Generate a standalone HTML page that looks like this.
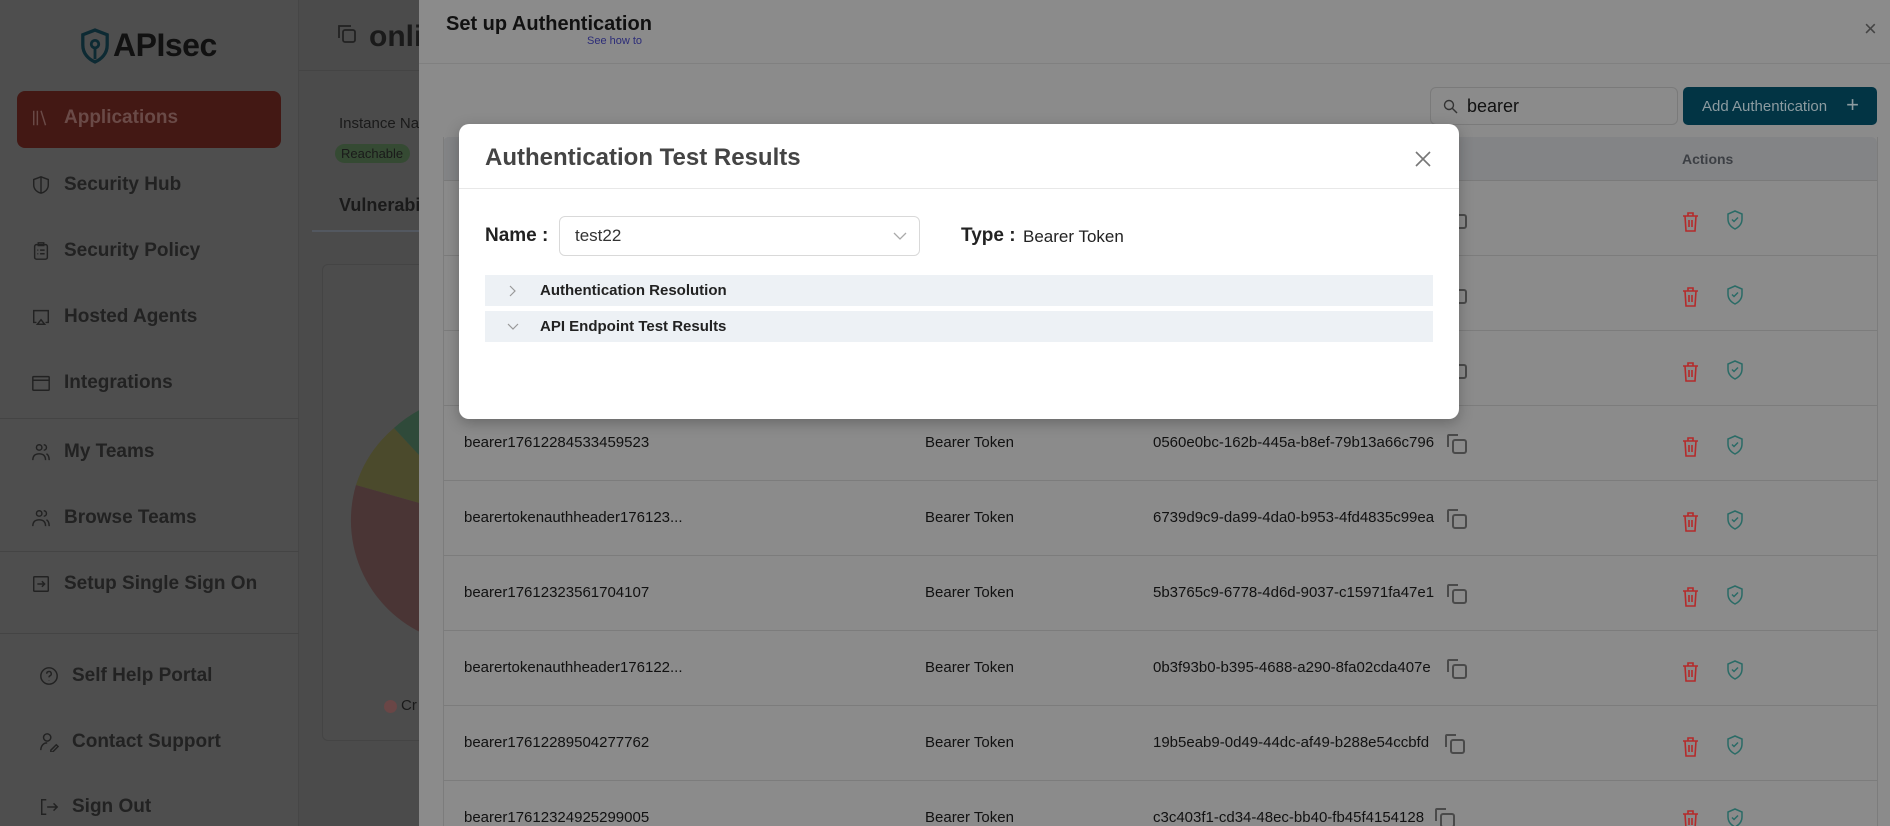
<!DOCTYPE html>
<html><head><meta charset="utf-8"><style>
*{box-sizing:border-box;margin:0;padding:0}
html,body{width:1890px;height:826px;overflow:hidden}
body{background:#4b4b4b;font-family:"Liberation Sans",Arial,sans-serif}
#wrap{position:relative;width:1890px;height:826px;overflow:hidden;background:#4b4b4b}
.abs{position:absolute}
#side{left:0;top:0;width:299px;height:826px;background:#4e4e4e;border-right:1px solid #464646}
.mi{position:absolute;left:31px;font-size:19px;font-weight:bold;color:#222;display:flex;align-items:center;gap:13px}
.mi svg{width:20px;height:20px;stroke:#222;fill:none;stroke-width:1.6}
.hr{position:absolute;left:0;width:299px;height:1px;background:#444}
#drawer{left:419px;top:0;width:1471px;height:826px;background:#8b8b8b}
.row{position:absolute;left:443px;width:1434px;height:75px;border-bottom:1px solid #7c7c7c;font-size:15px;color:#111}
.row span{position:absolute;top:28px}
#modal{left:459px;top:124px;width:1000px;height:295px;background:#fff;border-radius:10px;box-shadow:0 4px 14px rgba(0,0,0,.25)}
.acc{position:absolute;left:26px;width:948px;height:31px;background:#edf1f5;font-size:15px;font-weight:bold;color:#222}
.acc b{position:absolute;left:55px;top:7px}
</style></head><body><div id="wrap">
<div id="side" class="abs">
 <div class="abs" style="left:80px;top:27px;display:flex;align-items:center;gap:3px">
  <svg width="30" height="36" viewBox="0 0 32 38"><path d="M16 2 L29 7 V18 C29 27 23 33 16 36 C9 33 3 27 3 18 V7 Z" fill="none" stroke="#0d2a33" stroke-width="3.5"/><circle cx="16" cy="17" r="4" fill="none" stroke="#0d2a33" stroke-width="3"/><path d="M16 21 V33" stroke="#0d2a33" stroke-width="3"/></svg>
  <span style="font-size:32px;font-weight:bold;color:#111;letter-spacing:-.5px">APIsec</span>
 </div>
 <div class="abs" style="left:17px;top:91px;width:264px;height:57px;background:#431814;border-radius:8px"></div>
 <div class="mi" style="top:107px;color:#6a4a47"><svg viewBox="0 0 22 22" style="stroke:#6a4a47"><path d="M3 3v16M7 3v16M11 3l5 16"/></svg>Applications</div>
 <div class="mi" style="top:174px"><svg viewBox="0 0 22 22"><path d="M11 2 L19 5 V11 C19 16 15 19 11 20 C7 19 3 16 3 11 V5 Z M11 2 V20"/></svg>Security Hub</div>
 <div class="mi" style="top:240px"><svg viewBox="0 0 22 22"><rect x="4" y="4" width="14" height="16" rx="2"/><path d="M8 2h6v3H8zM7 10h1M10 10h5M7 14h1M10 14h5"/></svg>Security Policy</div>
 <div class="mi" style="top:306px"><svg viewBox="0 0 22 22"><path d="M6 17H3V4h16v13h-3M11 14l4 5H7z"/></svg>Hosted Agents</div>
 <div class="mi" style="top:372px"><svg viewBox="0 0 22 22"><rect x="2" y="4" width="18" height="15" rx="1"/><path d="M2 8h18"/></svg>Integrations</div>
 <div class="hr" style="top:418px"></div>
 <div class="mi" style="top:441px"><svg viewBox="0 0 22 22"><circle cx="9" cy="6" r="3"/><path d="M2 20c0-5 3-7 7-7s7 2 7 7M14 3a3 3 0 0 1 0 6M17 13c2 1 3 3 3 7"/></svg>My Teams</div>
 <div class="mi" style="top:507px"><svg viewBox="0 0 22 22"><circle cx="9" cy="6" r="3"/><path d="M2 20c0-5 3-7 7-7s7 2 7 7M14 3a3 3 0 0 1 0 6M17 13c2 1 3 3 3 7"/></svg>Browse Teams</div>
 <div class="hr" style="top:551px"></div>
 <div class="mi" style="top:573px"><svg viewBox="0 0 22 22"><rect x="3" y="3" width="16" height="16" rx="1"/><path d="M7 11h8M12 8l3 3-3 3"/></svg>Setup Single Sign On</div>
 <div class="hr" style="top:633px"></div>
 <div class="mi" style="top:665px;left:39px"><svg viewBox="0 0 22 22"><circle cx="11" cy="11" r="9"/><path d="M8.5 8.5a2.5 2.5 0 1 1 3.5 2.3c-.7.4-1 1-1 1.7M11 15.5v.5"/></svg>Self Help Portal</div>
 <div class="mi" style="top:731px;left:39px"><svg viewBox="0 0 22 22"><circle cx="9" cy="6" r="4"/><path d="M2 20c0-5 3-8 7-8M13 20l6-6 2 2-6 6h-2z"/></svg>Contact Support</div>
 <div class="mi" style="top:796px;left:39px"><svg viewBox="0 0 22 22"><path d="M8 3H3v16h5M9 11h11M16 7l4 4-4 4"/></svg>Sign Out</div>
</div>
<svg class="abs" style="left:335px;top:22px" width="24" height="24" viewBox="0 0 24 24" fill="none" stroke="#222" stroke-width="1.8"><path d="M4 16V4h12"/><rect x="8" y="8" width="12" height="12" rx="2"/></svg>
<div class="abs" style="left:369px;top:20px;font-size:30px;font-weight:bold;color:#1a1a1a">onli</div>
<div class="abs" style="left:299px;top:70px;width:120px;height:1px;background:#444"></div>
<div class="abs" style="left:339px;top:115px;font-size:15px;color:#1a1a1a">Instance Na</div>
<div class="abs" style="left:335px;top:144px;width:75px;height:19px;border-radius:10px;background:#354a33;font-size:13px;color:#1a1a1a;padding:2px 6px">Reachable</div>
<div class="abs" style="left:339px;top:195px;font-size:18px;font-weight:bold;color:#1a1a1a">Vulnerabi</div>
<div class="abs" style="left:312px;top:230px;width:107px;height:2px;background:#535860"></div>
<div class="abs" style="left:322px;top:264px;width:120px;height:477px;border:1px solid #444;border-radius:6px;background:#4c4c4c"></div>
<svg class="abs" style="left:340px;top:380px" width="79" height="280" viewBox="340 380 79 280">
 <path d="M479 520 L356 485 A125 125 0 0 0 440 640 Z" fill="#4a3535"/>
 <path d="M479 520 L394 428 A125 125 0 0 0 356 485 Z" fill="#4b4a2c"/>
 <path d="M479 520 L430 405 A125 125 0 0 0 394 428 Z" fill="#2f4a3a"/>
</svg>
<div class="abs" style="left:384px;top:700px;width:13px;height:13px;border-radius:50%;background:#6a4646"></div>
<div class="abs" style="left:401px;top:697px;font-size:15px;color:#1a1a1a">Cr</div>
<div id="drawer" class="abs">
 <div class="abs" style="left:27px;top:13px;font-size:20px;font-weight:bold;color:#111">Set up Authentication</div>
 <div class="abs" style="left:168px;top:35px;font-size:11px;color:#2c2c78">See how to</div>
 <div class="abs" style="left:1445px;top:16px;font-size:22px;color:#444">×</div>
 <div class="abs" style="left:0;top:63px;width:1471px;height:1px;background:#808080"></div>
 <div class="abs" style="left:1011px;top:87px;width:248px;height:38px;border:1px solid #7a7a7a;border-radius:6px;font-size:18px;color:#111;padding:8px 0 0 36px">bearer
  <svg class="abs" style="left:12px;top:11px" width="15" height="15" viewBox="0 0 15 15" fill="none" stroke="#333" stroke-width="1.4"><circle cx="6" cy="6" r="4.5"/><path d="M9.5 9.5L14 14"/></svg></div>
 <div class="abs" style="left:1264px;top:87px;width:194px;height:38px;background:#023444;border-radius:5px;color:#8c9ba0;font-size:15px;padding:11px 0 0 19px">Add Authentication <span style="font-size:22px;position:absolute;right:18px;top:5px">+</span></div>
 <div class="abs" style="left:24px;top:137px;width:1434px;height:44px;background:#838486;border-radius:6px 6px 0 0;border-bottom:1px solid #7a7a7a"></div>
 <div class="abs" style="left:1263px;top:151px;font-size:14px;font-weight:bold;color:#3c3f44">Actions</div>
 <div class="abs" style="left:24px;top:137px;width:1px;height:689px;background:#7c7c7c"></div>
 <div class="abs" style="left:1458px;top:137px;width:1px;height:689px;background:#7c7c7c"></div>
</div>
<div class="row" style="top:181px"></div>
<div class="row" style="top:256px"></div>
<div class="row" style="top:331px"></div>
<div class="row" style="top:406px"><span style="left:21px">bearer17612284533459523</span><span style="left:482px">Bearer Token</span><span style="left:710px">0560e0bc-162b-445a-b8ef-79b13a66c796</span></div>
<div class="row" style="top:481px"><span style="left:21px">bearertokenauthheader176123...</span><span style="left:482px">Bearer Token</span><span style="left:710px">6739d9c9-da99-4da0-b953-4fd4835c99ea</span></div>
<div class="row" style="top:556px"><span style="left:21px">bearer17612323561704107</span><span style="left:482px">Bearer Token</span><span style="left:710px">5b3765c9-6778-4d6d-9037-c15971fa47e1</span></div>
<div class="row" style="top:631px"><span style="left:21px">bearertokenauthheader176122...</span><span style="left:482px">Bearer Token</span><span style="left:710px">0b3f93b0-b395-4688-a290-8fa02cda407e</span></div>
<div class="row" style="top:706px"><span style="left:21px">bearer17612289504277762</span><span style="left:482px">Bearer Token</span><span style="left:710px">19b5eab9-0d49-44dc-af49-b288e54ccbfd</span></div>
<div class="row" style="top:781px;height:45px;border-bottom:none"><span style="left:21px">bearer17612324925299005</span><span style="left:482px">Bearer Token</span><span style="left:710px">c3c403f1-cd34-48ec-bb40-fb45f4154128</span></div>
<svg class="abs" style="left:0;top:0" width="1890" height="826" fill="none">
 <defs>
  <g id="cp" stroke="#4a4a4a" stroke-width="2"><path d="M2 14V3a1 1 0 0 1 1-1h9"/><rect x="7" y="7" width="13" height="13" rx="2"/></g>
  <g id="tr" stroke="#b52a2a" stroke-width="1.6"><path d="M1 4h15M6 4V1h5v3M3 4l1 15h9l1-15M7 8v7M10 8v7"/></g>
  <g id="sh" stroke="#2a6b66" stroke-width="1.5"><path d="M8 1l7 3v5c0 5-3 8-7 10C4 17 1 14 1 9V4z"/><path d="M5 9.5l2 2 4-4"/></g>
 </defs>
 <use href="#cp" x="1446" y="208"/><use href="#tr" x="1682" y="212"/><use href="#sh" x="1727" y="210"/>
 <use href="#cp" x="1446" y="283"/><use href="#tr" x="1682" y="287"/><use href="#sh" x="1727" y="285"/>
 <use href="#cp" x="1446" y="358"/><use href="#tr" x="1682" y="362"/><use href="#sh" x="1727" y="360"/>
 <use href="#cp" x="1446" y="433"/><use href="#tr" x="1682" y="437"/><use href="#sh" x="1727" y="435"/>
 <use href="#cp" x="1446" y="508"/><use href="#tr" x="1682" y="512"/><use href="#sh" x="1727" y="510"/>
 <use href="#cp" x="1446" y="583"/><use href="#tr" x="1682" y="587"/><use href="#sh" x="1727" y="585"/>
 <use href="#cp" x="1446" y="658"/><use href="#tr" x="1682" y="662"/><use href="#sh" x="1727" y="660"/>
 <use href="#cp" x="1444" y="733"/><use href="#tr" x="1682" y="737"/><use href="#sh" x="1727" y="735"/>
 <use href="#cp" x="1434" y="807"/><use href="#tr" x="1682" y="810"/><use href="#sh" x="1727" y="808"/>
</svg>
<div id="modal" class="abs">
 <div class="abs" style="left:26px;top:20px;font-size:24px;font-weight:bold;color:#444">Authentication Test Results</div>
 <svg class="abs" style="left:956px;top:27px" width="16" height="16" viewBox="0 0 16 16" stroke="#777" stroke-width="1.6"><path d="M1 1l14 14M15 1L1 15"/></svg>
 <div class="abs" style="left:0;top:64px;width:1000px;height:1px;background:#e8e8e8"></div>
 <div class="abs" style="left:26px;top:101px;font-size:19px;font-weight:bold;color:#222">Name :</div>
 <div class="abs" style="left:100px;top:92px;width:361px;height:40px;border:1px solid #d9d9d9;border-radius:6px;font-size:17px;color:#333;padding:9px 0 0 15px">test22
  <svg class="abs" style="right:12px;top:15px" width="14" height="9" viewBox="0 0 14 9" fill="none" stroke="#aaa" stroke-width="1.3"><path d="M1 1l6 6 6-6"/></svg></div>
 <div class="abs" style="left:502px;top:101px;font-size:19px;font-weight:bold;color:#222">Type :</div>
 <div class="abs" style="left:564px;top:103px;font-size:17px;color:#222">Bearer Token</div>
 <div class="acc" style="top:151px"><svg class="abs" style="left:24px;top:10px" width="7" height="12" viewBox="0 0 7 12" fill="none" stroke="#999" stroke-width="1.2"><path d="M1 1l5 5-5 5"/></svg><b>Authentication Resolution</b></div>
 <div class="acc" style="top:187px"><svg class="abs" style="left:22px;top:12px" width="12" height="7" viewBox="0 0 12 7" fill="none" stroke="#999" stroke-width="1.2"><path d="M1 1l5 5 5-5"/></svg><b>API Endpoint Test Results</b></div>
</div>
</div></body></html>
